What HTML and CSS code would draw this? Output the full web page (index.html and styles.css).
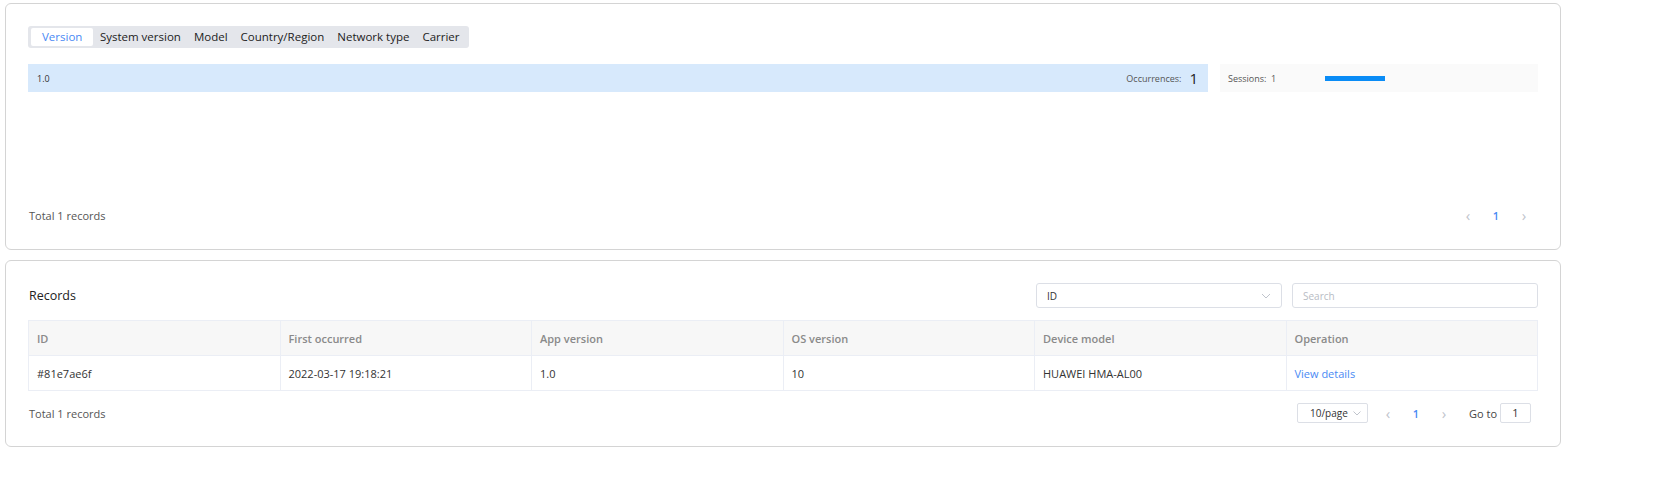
FILE: index.html
```html
<!DOCTYPE html>
<html lang="en">
<head>
    <meta charset="UTF-8">
    <meta name="viewport" content="width=device-width, initial-scale=1.0">
    <title>Crash Distribution</title>
    <link rel="stylesheet" href="styles.css">
</head>
<body>
    <div class="page">
        <div class="card dist-card">
            <div class="tabs">
                <div class="tab active">Version</div>
                <div class="tab">System version</div>
                <div class="tab">Model</div>
                <div class="tab">Country/Region</div>
                <div class="tab">Network type</div>
                <div class="tab">Carrier</div>
            </div>

            <div class="dist-list">
                <div class="dist-row">
                    <div class="dist-main">
                        <span class="dist-name">1.0</span>
                        <span class="dist-count">Occurrences:<b>1</b></span>
                    </div>
                    <div class="dist-side">
                        <span class="sessions">Sessions:&nbsp;&nbsp;1</span>
                        <div class="bar" style="width: 60px"></div>
                    </div>
                </div>
            </div>

            <div class="card-foot">
                <span class="total">Total 1 records</span>
                <div class="pager">
                    <span class="arrow">&#8249;</span>
                    <span class="page-num">1</span>
                    <span class="arrow">&#8250;</span>
                </div>
            </div>
        </div>

        <div class="card records-card">
            <div class="records-head">
                <span class="records-title">Records</span>
                <div class="filters">
                    <div class="select">
                        <span>ID</span>
                        <svg class="chevron" width="10" height="6" viewBox="0 0 10 6"><path d="M1 1l4 4 4-4" fill="none" stroke="#c0c4cc" stroke-width="1"/></svg>
                    </div>
                    <div class="search">Search</div>
                </div>
            </div>

            <table class="records">
                <thead>
                    <tr>
                        <th>ID</th>
                        <th>First occurred</th>
                        <th>App version</th>
                        <th>OS version</th>
                        <th>Device model</th>
                        <th>Operation</th>
                    </tr>
                </thead>
                <tbody>
                    <tr>
                        <td>#81e7ae6f</td>
                        <td>2022-03-17 19:18:21</td>
                        <td>1.0</td>
                        <td>10</td>
                        <td>HUAWEI HMA-AL00</td>
                        <td><a class="link" href="#">View details</a></td>
                    </tr>
                </tbody>
            </table>

            <div class="card-foot records-foot">
                <span class="total">Total 1 records</span>
                <div class="pager">
                    <div class="size-select">
                        <span>10/page</span>
                        <svg class="chevron" width="8" height="5" viewBox="0 0 8 5"><path d="M0.5 0.5l3.5 3.5 3.5-3.5" fill="none" stroke="#c0c4cc" stroke-width="1"/></svg>
                    </div>
                    <span class="arrow">&#8249;</span>
                    <span class="page-num">1</span>
                    <span class="arrow">&#8250;</span>
                    <span class="goto">Go to</span>
                    <div class="goto-input">1</div>
                </div>
            </div>
        </div>
    </div>
</body>
</html>
```

FILE: styles.css
```css
body {
    margin: 0;
    font-family: "Open Sans", "Noto Sans", Arial, sans-serif;
    color: #333;
    background-color: #fff;
}
.page {
    width: 1556px;
    padding: 3px 0 0 5px;
    display: flex;
    flex-direction: column;
    gap: 10px;
}
.card {
    border: 1px solid #d4d4d4;
    border-radius: 6px;
    padding: 22px 22px 0 22px;
    box-sizing: border-box;
}
.dist-card {
    height: 247px;
    display: flex;
    flex-direction: column;
}
.records-card {
    height: 187px;
}

/* tabs */
.tabs {
    display: flex;
    align-self: flex-start;
    background-color: #e4e6eb;
    border-radius: 3px;
    padding: 2px 3px;
    height: 22px;
    box-sizing: border-box;
}
.tab {
    font-size: 11.5px;
    line-height: 18px;
    padding: 0 6.5px;
    color: #222;
    border-radius: 2px;
}
.tab.active {
    background-color: #fff;
    color: #4a8af4;
    padding: 0 11px;
}

/* distribution list */
.dist-list {
    margin-top: 16px;
    flex: 1;
}
.dist-row {
    display: flex;
    gap: 12px;
    height: 28px;
}
.dist-main {
    flex: 1;
    background-color: #d7e9fc;
    display: flex;
    align-items: center;
    justify-content: space-between;
    padding: 0 10px 0 9px;
    font-size: 9px;
}
.dist-count {
    color: #555;
    font-size: 9px;
    display: flex;
    align-items: center;
}
.dist-count b {
    font-weight: normal;
    font-size: 15px;
    color: #222;
    margin-left: 8px;
}
.dist-side {
    width: 318px;
    background-color: #fafafa;
    display: flex;
    align-items: center;
    padding-left: 8px;
    box-sizing: border-box;
    font-size: 9px;
    color: #555;
}
.sessions {
    width: 97px;
}
.bar {
    height: 5px;
    background-color: #0a8cf6;
}

/* footers */
.card-foot {
    display: flex;
    justify-content: space-between;
    align-items: center;
    height: 20px;
    margin-bottom: 24px;
    font-size: 11px;
}
.total {
    color: #555;
    padding-left: 1px;
}
.pager {
    display: flex;
    align-items: center;
    font-size: 11px;
}
.arrow {
    color: #c0c4cc;
    font-size: 15px;
    width: 28px;
    text-align: center;
}
.page-num {
    color: #4a8af4;
    font-weight: 600;
    width: 28px;
    text-align: center;
}

/* records */
.records-head {
    display: flex;
    justify-content: space-between;
    align-items: center;
    height: 25px;
}
.records-title {
    font-size: 12.5px;
    color: #222;
    padding-left: 1px;
}
.filters {
    display: flex;
    gap: 10px;
}
.select, .search {
    width: 246px;
    height: 25px;
    border: 1px solid #dcdfe6;
    border-radius: 3px;
    box-sizing: border-box;
    font-size: 10px;
    display: flex;
    align-items: center;
    padding: 0 10px;
}
.select {
    justify-content: space-between;
    color: #333;
}
.search {
    color: #b8bcc4;
}
.records {
    width: 100%;
    margin-top: 12px;
    border-collapse: collapse;
    table-layout: fixed;
    font-size: 11px;
}
.records th, .records td {
    border: 1px solid #ebeef5;
    height: 34px;
    padding: 0 8px;
    text-align: left;
}
.records th {
    background-color: #f7f7f7;
    color: #8a8a8a;
    font-weight: 600;
}
.records td {
    color: #333;
}
.link {
    color: #4a8af4;
    text-decoration: none;
}
.records-foot {
    margin-top: 12px;
}
.size-select {
    width: 71px;
    height: 20px;
    border: 1px solid #dcdfe6;
    border-radius: 2px;
    box-sizing: border-box;
    display: flex;
    align-items: center;
    justify-content: space-between;
    padding: 0 6px 0 12px;
    font-size: 10px;
    color: #333;
    margin-right: 6px;
}
.goto {
    margin-left: 11px;
    color: #444;
}
.goto-input {
    width: 31px;
    height: 20px;
    border: 1px solid #dcdfe6;
    border-radius: 2px;
    box-sizing: border-box;
    text-align: center;
    line-height: 18px;
    margin-left: 3px;
    margin-right: 7px;
}
```
